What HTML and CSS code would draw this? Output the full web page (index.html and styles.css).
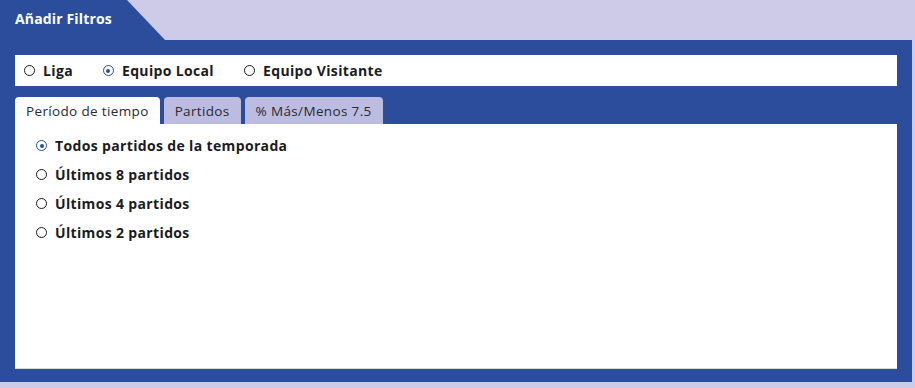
FILE: index.html
```html
<!DOCTYPE html>
<html lang="es">
<head>
  <meta charset="UTF-8" />
  <title>Añadir Filtros</title>
  <link rel="stylesheet" href="styles.css">
</head>
<body>
  <div class="filtros">
    <div class="cabecera">
      <div class="cabecera-tab">Añadir Filtros</div>
    </div>
    <div class="panel">
      <div class="equipo-bar">
        <label class="radio"><span class="circulo"></span>Liga</label>
        <label class="radio"><span class="circulo activo"></span>Equipo Local</label>
        <label class="radio"><span class="circulo"></span>Equipo Visitante</label>
      </div>
      <div class="tabs">
        <div class="tab activa">Período de tiempo</div>
        <div class="tab">Partidos</div>
        <div class="tab">% Más/Menos 7.5</div>
      </div>
      <div class="contenido">
        <label class="radio fila"><span class="circulo activo"></span>Todos partidos de la temporada</label>
        <label class="radio fila"><span class="circulo"></span>Últimos 8 partidos</label>
        <label class="radio fila"><span class="circulo"></span>Últimos 4 partidos</label>
        <label class="radio fila"><span class="circulo"></span>Últimos 2 partidos</label>
      </div>
    </div>
  </div>
</body>
</html>
```

FILE: styles.css
```css
body {
  margin: 0;
  background: #cdcbe8;
  font-family: "Open Sans", sans-serif;
  color: #1b1b1f;
}

.filtros {
  width: 912px;
}

.cabecera {
  height: 40px;
}

.cabecera-tab {
  width: 165px;
  height: 40px;
  box-sizing: border-box;
  background: #2b4d9c;
  clip-path: polygon(0 0, 127px 0, 165px 100%, 0 100%);
  color: #fff;
  font-weight: 700;
  font-size: 14px;
  letter-spacing: 0.15px;
  padding: 9px 0 0 15px;
}

.panel {
  background: #2b4d9c;
  padding: 15px 15px 13px;
}

.equipo-bar {
  background: #fff;
  height: 31px;
  display: flex;
  align-items: center;
  padding-left: 9px;
  gap: 30px;
}

.radio {
  display: flex;
  align-items: center;
  font-weight: 700;
  font-size: 14px;
  letter-spacing: 0.35px;
}

.circulo {
  width: 11px;
  height: 11px;
  border: 1.5px solid #1b1b1f;
  border-radius: 50%;
  box-sizing: border-box;
  margin-right: 8px;
  display: flex;
  align-items: center;
  justify-content: center;
}

.circulo.activo {
  border-color: #2b4d9c;
}

.circulo.activo::after {
  content: "";
  width: 4px;
  height: 4px;
  border-radius: 50%;
  background: #2b4d9c;
}

.tabs {
  display: flex;
  gap: 4px;
  margin-top: 11px;
}

.tab {
  height: 27px;
  box-sizing: border-box;
  padding: 5px 11px 0;
  background: #bcbbe0;
  border-radius: 4px 4px 0 0;
  font-size: 13.5px;
  letter-spacing: 0.35px;
  color: #2a2a33;
}

.tab.activa {
  background: #fff;
}

.contenido {
  background: #fff;
  height: 245px;
  box-sizing: border-box;
  border-bottom: 1px solid #d9d9e2;
  padding: 7px 0 0 21px;
}

.fila {
  height: 29px;
}
```
